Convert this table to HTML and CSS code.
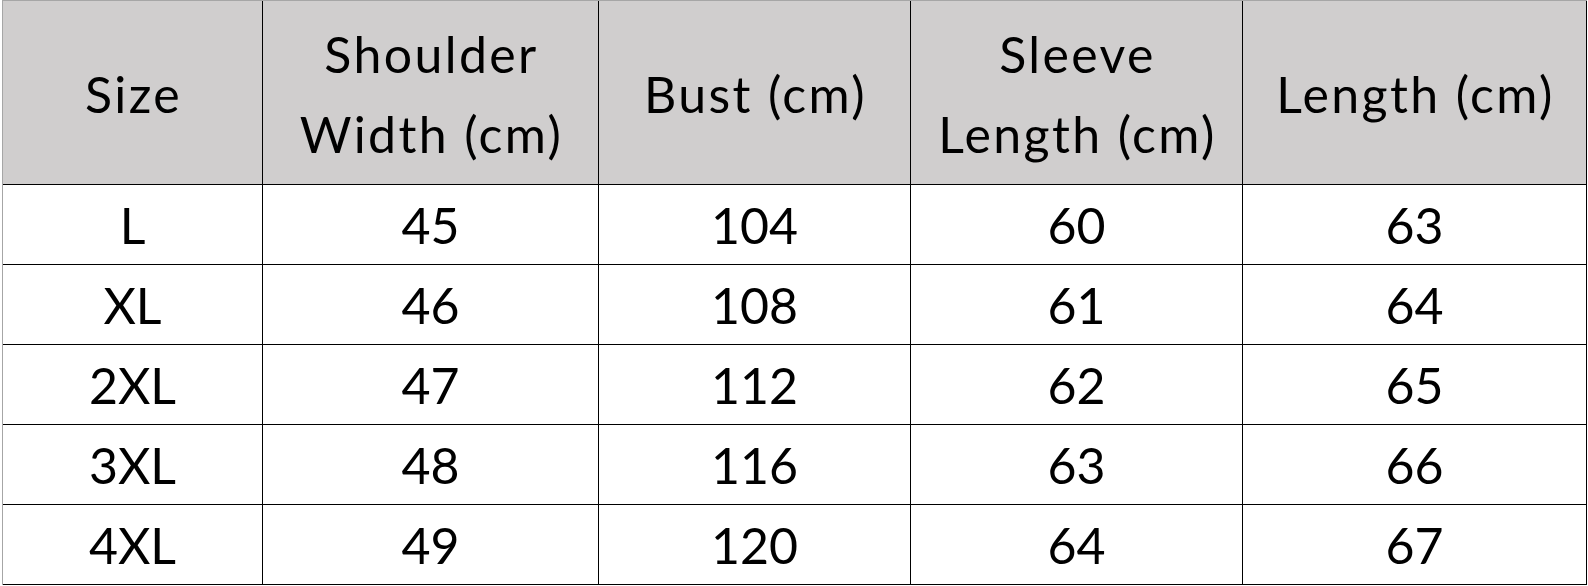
FILE: index.html
```html
<!DOCTYPE html>
<html>
<head>
<meta charset="utf-8">
<link rel="stylesheet" href="styles.css">
</head>
<body>
<div class="table">
  <div class="cell head">Size</div>
  <div class="cell head">Shoulder<br>Width (cm)</div>
  <div class="cell head">Bust (cm)</div>
  <div class="cell head">Sleeve<br>Length (cm)</div>
  <div class="cell head">Length (cm)</div>

  <div class="cell">L</div><div class="cell">45</div><div class="cell">104</div><div class="cell">60</div><div class="cell">63</div>
  <div class="cell">XL</div><div class="cell">46</div><div class="cell">108</div><div class="cell">61</div><div class="cell">64</div>
  <div class="cell">2XL</div><div class="cell">47</div><div class="cell">112</div><div class="cell">62</div><div class="cell">65</div>
  <div class="cell">3XL</div><div class="cell">48</div><div class="cell">116</div><div class="cell">63</div><div class="cell">66</div>
  <div class="cell">4XL</div><div class="cell">49</div><div class="cell">120</div><div class="cell">64</div><div class="cell">67</div>
</div>
</body>
</html>
```

FILE: styles.css
```css
html, body {
  margin: 0;
  padding: 0;
  background: #ffffff;
}
.table {
  display: grid;
  grid-template-columns: 260px 336px 312px 332px 344px;
  grid-template-rows: 184px repeat(5, 80px);
  margin-left: 2px;
  width: max-content;
  border-top: 1px solid #a6a6a6;
  border-left: 1px solid #a6a6a6;
  font-family: "Lato", "Liberation Sans", sans-serif;
  font-size: 50px;
  line-height: 80px;
  color: #000;
}
.cell {
  box-sizing: border-box;
  border-right: 1px solid #000;
  border-bottom: 1px solid #000;
  display: flex;
  align-items: center;
  justify-content: center;
  text-align: center;
  background: #ffffff;
}
.head {
  background: #d0cece;
  padding-top: 3px;
  padding-left: 2px;
  letter-spacing: 2.4px;
}
```
